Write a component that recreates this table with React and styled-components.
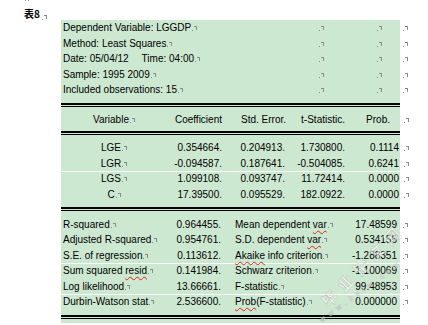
import React from 'react';
import styled, { createGlobalStyle } from 'styled-components';

const Global = createGlobalStyle`
  html, body { margin: 0; padding: 0; background: #ffffff; }
  body {
    font-family: "Liberation Sans", Arial, "Noto Sans CJK SC", sans-serif;
    font-size: 10px;
    color: #000;
  }
`;

const Page = styled.div`
  position: relative;
  width: 428px;
  height: 325px;
  overflow: hidden;
`;

const TopStub = styled.div`
  height: 3px;
  padding-left: 25px;
  display: flex;
  gap: 2px;
  align-items: flex-start;
`;

const Dot = styled.span`
  width: 1px;
  height: 1px;
  background: #8a8a8a;
`;

const Caption = styled.div`
  height: 17px;
  padding-left: 24px;
  display: flex;
  align-items: flex-end;
  line-height: 12px;
  font-size: 10px;
  font-family: "Noto Sans CJK SC", "Liberation Sans", sans-serif;
  font-weight: 700;
  box-sizing: border-box;
`;

const MarkSvg = styled.svg`
  display: inline-block;
  vertical-align: baseline;
  fill: #8a8a8a;
  shape-rendering: crispEdges;
  margin-left: ${p => p.$ml ?? 1}px;
`;

const Mark = ({ ml }) => (
  <MarkSvg $ml={ml} width="5" height="5" viewBox="0 0 5 5" aria-hidden="true">
    <rect x="0" y="4" width="1" height="1" />
    <rect x="2" y="0" width="3" height="1" />
    <rect x="4" y="0" width="1" height="4" />
  </MarkSvg>
);

const Table = styled.div`
  margin-left: 61px;
  width: 339px;
  background: #cde8d0;
  padding-bottom: 4px;
`;

const Rule = styled.div`
  height: 1px;
  border-top: 2px solid #000;
  border-bottom: 1px solid #000;
`;

const Block = styled.div`
  padding-top: ${p => p.$pt}px;
  padding-bottom: ${p => p.$pb}px;
`;

const Row = styled.div`
  display: grid;
  grid-template-columns: ${p => p.$cols};
  height: 15.5px;
  line-height: 15.5px;
  white-space: nowrap;
  box-shadow: ${p => (p.$split ? 'inset 0 1px 0 #ffffff' : 'none')};
`;

const Cell = styled.div`
  text-align: ${p => p.$align || 'left'};
  padding-left: ${p => p.$pl ?? 0}px;
  padding-right: ${p => p.$pr ?? 0}px;
  overflow: visible;
`;

const EndCell = styled.div`
  width: 0;
  overflow: visible;
  white-space: nowrap;
`;

const Gap = styled.span`
  display: inline-block;
  width: ${p => p.$w}px;
`;

const Squiggle = styled.span`
  text-decoration: underline wavy #e02020;
  text-decoration-thickness: 1px;
  text-underline-offset: 2px;
  text-decoration-skip-ink: none;
`;

const Tail = styled.span`
  color: #222;
`;

const Watermark = styled.div`
  position: absolute;
  left: ${p => p.$x}px;
  top: ${p => p.$y}px;
  transform: rotate(${p => p.$rot}deg);
  transform-origin: left top;
  font-family: "Noto Sans CJK SC", sans-serif;
  font-size: ${p => p.$size}px;
  line-height: 1;
  font-weight: 700;
  letter-spacing: ${p => p.$ls}px;
  color: rgba(255, 255, 255, 0.6);
  -webkit-text-stroke: 0.6px rgba(140, 140, 140, 0.4);
  white-space: nowrap;
  pointer-events: none;
`;

const INFO_COLS = '255px 58px 26px 0';
const COEF_COLS = '106px 57px 63px 60px 53px 0';
const STAT_COLS = '109px 51px 14px 95px 70px 0';

const info = [
  <>Dependent Variable: LGGDP</>,
  <>Method: Least Squares</>,
  <>Date: 05/04/12<Gap $w={13} />Time: 04:00</>,
  <>Sample: 1995 2009</>,
  <>Included observations: 15</>,
];

const coefs = [
  { v: 'LGE', c: '0.354664', s: '0.204913', t: '1.730800', p: '0.1114' },
  { v: 'LGR', c: '-0.094587', s: '0.187641', t: '-0.504085', p: '0.6241' },
  { v: 'LGS', c: '1.099108', s: '0.093747', t: '11.72414', p: '0.0000', split: true },
  { v: 'C', c: '17.39500', s: '0.095529', t: '182.0922', p: '0.0000' },
];

const stats = [
  { l: <>R-squared</>, a: '0.964455', m: <>Mean dependent <Squiggle>var</Squiggle></>, b: '17.48599' },
  { l: <>Adjusted R-squared</>, a: '0.954761', m: <>S.D. dependent <Squiggle>var</Squiggle></>, b: '0.534155' },
  { l: <>S.E. of regression</>, a: '0.113612', m: <><Squiggle>Akaike</Squiggle> info criterion</>, b: '-1.288351' },
  { l: <>Sum squared <Squiggle>resid</Squiggle></>, a: '0.141984', m: <>Schwarz criterion</>, b: '-1.100069', split: true },
  { l: <>Log likelihood</>, a: '13.66661', m: <>F-statistic</>, b: '99.48953' },
  { l: <>Durbin-Watson stat</>, a: '2.536600', m: <><Squiggle>Prob</Squiggle>(F-statistic)</>, b: '0.000000', split: true },
];

export default function App() {
  return (
    <Page>
      <Global />
      <TopStub><Dot /><Dot /></TopStub>
      <Caption>表8<Mark ml={2} /></Caption>
      <Table>
        <Block $pt={0} $pb={5.5}>
          {info.map((t, i) => (
            <Row key={i} $cols={INFO_COLS}>
              <Cell $pl={2}>{t}<Mark /></Cell>
              <Cell $pl={3}><Mark ml={0} /></Cell>
              <Cell $pl={3}><Mark ml={0} /></Cell>
              <EndCell><Mark ml={3} /></EndCell>
            </Row>
          ))}
        </Block>
        <Rule />
        <Block $pt={5} $pb={3.5}>
          <Row $cols={COEF_COLS}>
            <Cell $align="center">Variable<Mark /></Cell>
            <Cell $align="right" $pr={2}>Coefficient</Cell>
            <Cell $align="right" $pr={1}>Std. Error.</Cell>
            <Cell $align="right" $pr={2}>t-Statistic.</Cell>
            <Cell $align="right" $pr={10}>Prob.</Cell>
            <EndCell><Mark ml={4} /></EndCell>
          </Row>
        </Block>
        <Rule />
        <Block $pt={5} $pb={5}>
          {coefs.map(r => (
            <Row key={r.v} $cols={COEF_COLS} $split={r.split}>
              <Cell $align="center">{r.v}<Mark /></Cell>
              <Cell $align="right" $pr={2}>{r.c}<Tail>.</Tail></Cell>
              <Cell $align="right" $pr={2}>{r.s}<Tail>.</Tail></Cell>
              <Cell $align="right" $pr={2}>{r.t}<Tail>.</Tail></Cell>
              <Cell $align="right" $pr={1}>{r.p}</Cell>
              <EndCell><Mark ml={4} /></EndCell>
            </Row>
          ))}
        </Block>
        <Rule />
        <Block $pt={5.5} $pb={5.5}>
          {stats.map((r, i) => (
            <Row key={i} $cols={STAT_COLS} $split={r.split}>
              <Cell $pl={2}>{r.l}<Mark /></Cell>
              <Cell $align="right">{r.a}<Tail>.</Tail></Cell>
              <Cell />
              <Cell>{r.m}<Mark /></Cell>
              <Cell $align="right" $pr={3}>{r.b}</Cell>
              <EndCell><Mark ml={3} /></EndCell>
            </Row>
          ))}
        </Block>
        <Rule />
      </Table>
      <Watermark $x={318} $y={298} $rot={-45} $size={16} $ls={6}>毕业论文网</Watermark>
      <Watermark $x={318} $y={318} $rot={-36} $size={7} $ls={4}>www.bylw.com</Watermark>
    </Page>
  );
}
